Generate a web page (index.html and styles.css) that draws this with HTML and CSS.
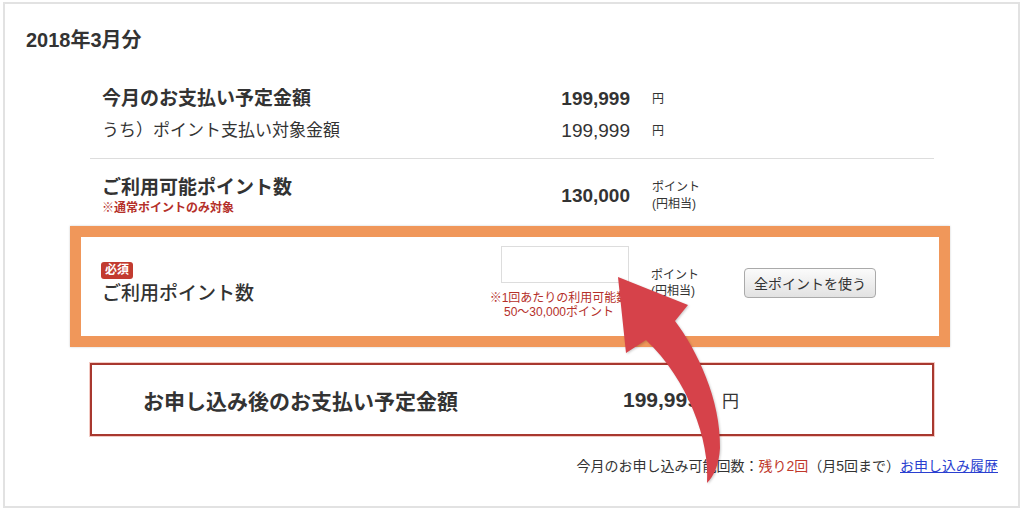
FILE: index.html
```html
<!DOCTYPE html>
<html lang="ja">
<head>
  <meta charset="UTF-8">
  <title>ポイント利用</title>
  <link rel="stylesheet" href="styles.css">
</head>
<body>
  <div class="frame">
    <h2 class="title">2018年3月分</h2>

    <div class="summary">
      <div class="totals">
        <div class="row">
          <div class="label bold">今月のお支払い予定金額</div>
          <div class="num bold">199,999</div>
          <div class="unit">円</div>
        </div>
        <div class="row">
          <div class="label">うち）ポイント支払い対象金額</div>
          <div class="num">199,999</div>
          <div class="unit">円</div>
        </div>
      </div>

      <div class="available">
        <div class="row">
          <div class="label">
            <div class="bold">ご利用可能ポイント数</div>
            <div class="note">※通常ポイントのみ対象</div>
          </div>
          <div class="num bold">130,000</div>
          <div class="unit">ポイント<br>(円相当)</div>
        </div>
      </div>

      <div class="use-box">
        <div class="use-row">
          <div class="use-label">
            <span class="badge">必須</span>
            <div class="use-title">ご利用ポイント数</div>
          </div>
          <div class="use-input">
            <input type="text" class="point-input">
            <div class="input-note">※1回あたりの利用可能数<br>50〜30,000ポイント</div>
          </div>
          <div class="unit">ポイント<br>(円相当)</div>
          <div><button type="button" class="all-btn">全ポイントを使う</button></div>
        </div>
      </div>

      <div class="after-box">
        <div class="after-label">お申し込み後のお支払い予定金額</div>
        <div class="after-num">199,999</div>
        <div class="after-unit">円</div>
      </div>
    </div>

    <p class="remain">今月のお申し込み可能回数：<span class="red">残り2回</span>（月5回まで）<a href="#">お申し込み履歴</a></p>
  </div>

  <svg class="arrow" width="1024" height="516" viewBox="0 0 1024 516">
    <path d="M618,277 L688,305 L675,321 C697,350 721,400 720,448 C719,465 714,476 707,483 C710,440 688,380 646,340 L626,353 Z" fill="#d6424a"/>
  </svg>
</body>
</html>
```

FILE: styles.css
```css
body {
  margin: 0;
  font-family: "Liberation Sans", "Noto Sans CJK JP", sans-serif;
  color: #333;
  background: #fff;
}
.frame {
  box-sizing: border-box;
  width: 1017px;
  height: 506px;
  margin: 2px 0 0 3px;
  border: 2px solid #e2e2e2;
}
.title {
  margin: 0;
  padding: 24px 0 0 21px;
  font-size: 20px;
  line-height: 24px;
  font-weight: bold;
}
.summary {
  margin: 31px 84px 0 85px;
}
.bold { font-weight: bold; }
.row {
  display: grid;
  grid-template-columns: 428px 100px 1fr;
  align-items: center;
  padding-left: 12px;
}
.totals {
  padding-bottom: 11px;
  border-bottom: 1px solid #ddd;
}
.totals .row { height: 32px; }
.totals .row:first-child .label { font-size: 19px; }
.label {
  font-size: 17px;
  line-height: 24px;
}
.available {
  padding-top: 17px;
}
.available .label { font-size: 19px; }
.num {
  text-align: right;
  font-size: 19px;
}
.unit {
  padding-left: 22px;
  font-size: 12px;
  line-height: 17px;
}
.note {
  color: #b5302a;
  font-size: 12px;
  line-height: 16px;
  font-weight: bold;
}
.use-box {
  margin: 10px -16px 0 -20px;
  border: 11px solid #f0975a;
  height: 99px;
  box-shadow: 0 0 2px rgba(0, 0, 0, 0.2);
}
.use-row {
  display: grid;
  grid-template-columns: 400px 128px 115px 1fr;
  align-items: center;
  padding: 9px 0 0 20px;
}
.use-label { line-height: 17px; }
.badge {
  display: inline-block;
  padding: 0 4px;
  background: #c23b30;
  color: #fff;
  font-size: 12px;
  font-weight: bold;
  line-height: 17px;
  border-radius: 3px;
}
.use-title {
  margin-top: 3px;
  padding-left: 1px;
  font-size: 19px;
  line-height: 24px;
  font-weight: 500;
}
.use-input { text-align: center; }
.point-input {
  box-sizing: border-box;
  display: block;
  width: 128px;
  height: 37px;
  margin: 0 0 8px;
  border: 1px solid #ddd;
}
.input-note {
  margin-left: -12px;
  color: #b5302a;
  font-size: 12px;
  line-height: 14px;
  white-space: nowrap;
}
.use-row .unit { line-height: 16px; }
.all-btn {
  height: 30px;
  padding: 0 9px;
  font-family: inherit;
  font-size: 14px;
  color: #333;
  border: 1px solid #aaa;
  border-radius: 4px;
  background: linear-gradient(#fbfbfb, #e2e2e2);
}
.after-box {
  display: flex;
  align-items: center;
  height: 69px;
  margin-top: 16px;
  padding-left: 51px;
  border: 2px solid #a8382f;
  box-shadow: 0 0 0 1px #f3cbc4;
}
.after-label {
  width: 480px;
  font-size: 21px;
  font-weight: bold;
}
.after-num {
  font-size: 21px;
  font-weight: bold;
}
.after-unit {
  margin-left: 23px;
  font-size: 17px;
}
.remain {
  margin: 20px 0 0;
  padding-right: 20px;
  text-align: right;
  font-size: 14px;
  line-height: 20px;
}
.red { color: #c0392b; }
.remain a { color: #2a3fd0; }
.arrow {
  position: absolute;
  top: 0;
  left: 0;
  pointer-events: none;
  filter: drop-shadow(1px 1px 1px rgba(0, 0, 0, 0.2));
}
```
